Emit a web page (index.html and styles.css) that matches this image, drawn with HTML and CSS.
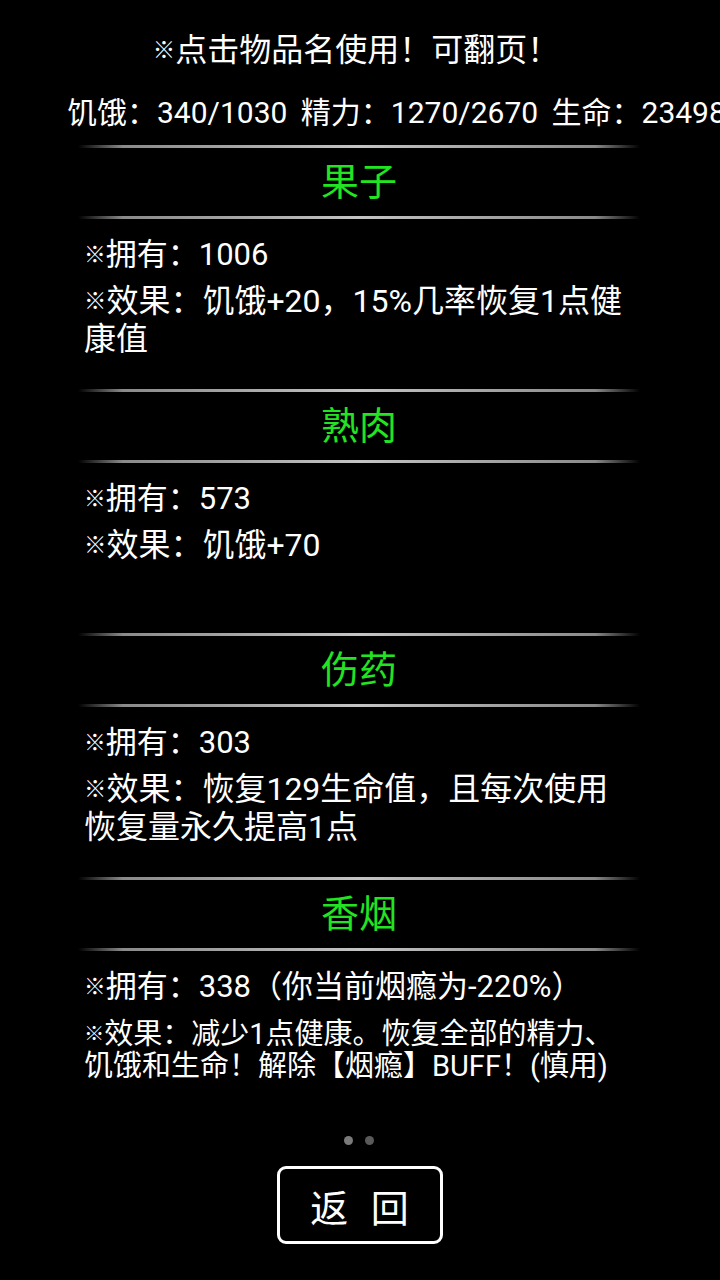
FILE: index.html
```html
<!DOCTYPE html>
<html lang="zh">
<head>
<meta charset="utf-8">
<link rel="stylesheet" href="styles.css">
</head>
<body>
<div class="page">
  <div class="hint"><span class="mark">※</span>点击物品名使用！可翻页！</div>
  <div class="stats">饥饿：340/1030 精力：1270/2670 生命：23498/23498</div>
  <div class="list">
    <section class="item">
      <div class="rule"></div>
      <div class="title">果子</div>
      <div class="rule"></div>
      <div class="body">
        <p class="own"><span class="mark">※</span>拥有：1006</p>
        <p class="eff"><span class="mark">※</span>效果：饥饿+20，15%几率恢复1点健康值</p>
      </div>
    </section>
    <section class="item">
      <div class="rule"></div>
      <div class="title">熟肉</div>
      <div class="rule"></div>
      <div class="body">
        <p class="own"><span class="mark">※</span>拥有：573</p>
        <p class="eff"><span class="mark">※</span>效果：饥饿+70</p>
      </div>
    </section>
    <section class="item">
      <div class="rule"></div>
      <div class="title">伤药</div>
      <div class="rule"></div>
      <div class="body">
        <p class="own"><span class="mark">※</span>拥有：303</p>
        <p class="eff"><span class="mark">※</span>效果：恢复129生命值，且每次使用恢复量永久提高1点</p>
      </div>
    </section>
    <section class="item">
      <div class="rule"></div>
      <div class="title">香烟</div>
      <div class="rule"></div>
      <div class="body">
        <p class="own"><span class="mark">※</span>拥有：338（你当前烟瘾为-220%）</p>
        <p class="eff small"><span class="mark">※</span>效果：减少1点健康。恢复全部的精力、饥饿和生命！解除【烟瘾】BUFF！(慎用)</p>
      </div>
    </section>
  </div>
  <div class="dots"><span class="dot on"></span><span class="dot"></span></div>
  <div class="actions"><button class="back">返 回</button></div>
</div>
</body>
</html>
```
FILE: styles.css
```css
html, body {
  margin: 0;
  padding: 0;
  background: #000;
}
body {
  width: 720px;
  height: 1280px;
  overflow: hidden;
  color: #fff;
  font-family: Roboto, "Noto Sans CJK SC", sans-serif;
}
.page {
  display: flex;
  flex-direction: column;
  padding-top: 30px;
}
.mark {
  font-size: 0.7em;
  line-height: 0;
  vertical-align: 0.13em;
}
.hint {
  height: 40px;
  font-size: 32px;
  line-height: 40px;
  text-align: center;
  padding-right: 8px;
}
.stats {
  margin-top: 23px;
  height: 40px;
  font-size: 30px;
  line-height: 40px;
  white-space: nowrap;
  overflow: hidden;
  padding-left: 67px;
  word-spacing: 6px;
}
.list {
  margin-top: 12px;
  margin-left: 78px;
  width: 562px;
  display: flex;
  flex-direction: column;
}
.item {
  height: 244px;
  display: flex;
  flex-direction: column;
}
.rule {
  height: 3px;
  background: linear-gradient(90deg, rgba(150,150,150,0) 0%, #8a8a8a 8%, #a8a8a8 30%, #c4c4c4 50%, #a8a8a8 70%, #8a8a8a 92%, rgba(150,150,150,0) 100%);
}
.title {
  height: 68px;
  line-height: 68px;
  text-align: center;
  font-size: 38px;
  color: #22e422;
}
.body {
  padding: 16px 12px 0 6px;
}
.body p {
  margin: 0;
}
.own {
  font-size: 31px;
  line-height: 40px;
}
.eff {
  font-size: 32px;
  margin-top: 7px !important;
  line-height: 38px;
}
.eff.small {
  font-size: 29px;
  line-height: 32px;
  margin-top: 11px !important;
}
.dots {
  margin-top: 15px;
  display: flex;
  justify-content: center;
  gap: 12px;
  padding-right: 2px;
}
.dot {
  width: 9px;
  height: 9px;
  border-radius: 50%;
  background: #5a5a5a;
}
.dot.on {
  background: #7a7a7a;
}
.actions {
  margin-top: 21px;
  display: flex;
  justify-content: center;
  padding-right: 1px;
}
.back {
  width: 166px;
  height: 78px;
  box-sizing: border-box;
  border: 3px solid #fff;
  border-radius: 9px;
  background: #000;
  color: #fff;
  font-family: "Noto Sans CJK SC", sans-serif;
  font-size: 38px;
  white-space: nowrap;
  word-spacing: 14px;
  padding: 0;
}
```
